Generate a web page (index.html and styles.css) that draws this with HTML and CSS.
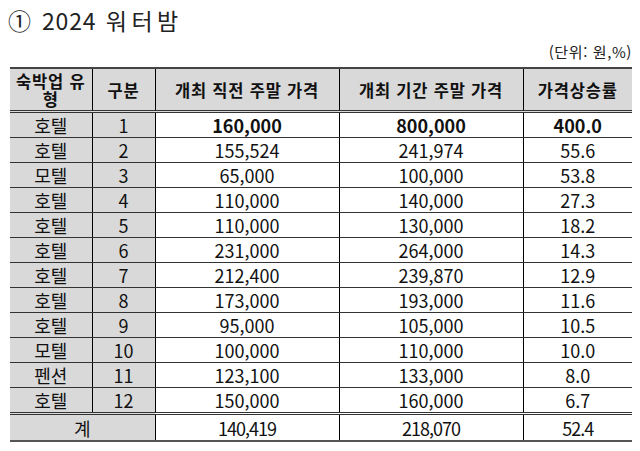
FILE: index.html
```html
<!DOCTYPE html>
<html lang="ko">
<head>
<meta charset="utf-8">
<link rel="stylesheet" href="styles.css">
</head>
<body>
<div class="page">
  <h1 class="title"><span class="num">① 2024</span> <span class="name">워터밤</span></h1>
  <div class="unit">(단위: 원,%)</div>
  <table class="data">
    <colgroup>
      <col class="c1"><col class="c2"><col class="c3"><col class="c4"><col class="c5">
    </colgroup>
    <thead>
      <tr>
        <th>숙박업 유형</th>
        <th>구분</th>
        <th>개최 직전 주말 가격</th>
        <th>개최 기간 주말 가격</th>
        <th>가격상승률</th>
      </tr>
    </thead>
    <tbody>
      <tr class="top"><td class="g">호텔</td><td class="g">1</td><td class="b">160,000</td><td class="b">800,000</td><td class="b">400.0</td></tr>
      <tr><td class="g">호텔</td><td class="g">2</td><td>155,524</td><td>241,974</td><td>55.6</td></tr>
      <tr><td class="g">모텔</td><td class="g">3</td><td>65,000</td><td>100,000</td><td>53.8</td></tr>
      <tr><td class="g">호텔</td><td class="g">4</td><td>110,000</td><td>140,000</td><td>27.3</td></tr>
      <tr><td class="g">호텔</td><td class="g">5</td><td>110,000</td><td>130,000</td><td>18.2</td></tr>
      <tr><td class="g">호텔</td><td class="g">6</td><td>231,000</td><td>264,000</td><td>14.3</td></tr>
      <tr><td class="g">호텔</td><td class="g">7</td><td>212,400</td><td>239,870</td><td>12.9</td></tr>
      <tr><td class="g">호텔</td><td class="g">8</td><td>173,000</td><td>193,000</td><td>11.6</td></tr>
      <tr><td class="g">호텔</td><td class="g">9</td><td>95,000</td><td>105,000</td><td>10.5</td></tr>
      <tr><td class="g">모텔</td><td class="g">10</td><td>100,000</td><td>110,000</td><td>10.0</td></tr>
      <tr><td class="g">펜션</td><td class="g">11</td><td>123,100</td><td>133,000</td><td>8.0</td></tr>
      <tr><td class="g">호텔</td><td class="g">12</td><td>150,000</td><td>160,000</td><td>6.7</td></tr>
    </tbody>
    <tfoot>
      <tr><td class="g" colspan="2">계</td><td>140,419</td><td>218,070</td><td>52.4</td></tr>
    </tfoot>
  </table>
</div>
</body>
</html>
```

FILE: styles.css
```css
html, body {
  margin: 0;
  padding: 0;
  background: #ffffff;
}

.page {
  padding: 0 8px 0 10px;
  font-family: "Noto Sans CJK KR", "Noto Sans", sans-serif;
  color: #111;
}

.title {
  margin: 0 0 0 -2px;
  font-size: 23px;
  font-weight: 400;
  line-height: 40px;
  color: #222;
  word-spacing: 3px;
}

.title .num {
  letter-spacing: 0.8px;
}

.title .name {
  letter-spacing: 4.5px;
}

.unit {
  margin-top: 3px;
  margin-bottom: 6px;
  text-align: right;
  font-size: 15px;
  line-height: 18px;
  letter-spacing: 0.6px;
  color: #222;
}

.data {
  width: 622px;
  border-collapse: collapse;
  table-layout: fixed;
  border-top: 2px solid #444;
  border-bottom: 2px solid #555;
}

.c1 { width: 82px; }
.c2 { width: 63px; }
.c3 { width: 184px; }
.c4 { width: 184px; }
.c5 { width: 109px; }

.data th,
.data td {
  padding: 0;
  text-align: center;
  border-left: 1px solid #000;
  border-bottom: 1px solid #333;
}

.data th:first-child,
.data td:first-child {
  border-left: none;
}

.data th {
  background: #d9d9d9;
  font-size: 16.5px;
  font-weight: 700;
  line-height: 18px;
  letter-spacing: 0.8px;
  height: 41px;
  padding: 0 4px;
  border-bottom: 3px double #333;
}

.data td {
  height: 24px;
  font-size: 18px;
  line-height: 22px;
}

.data td.g {
  background: #d9d9d9;
}

.data td.b {
  font-weight: 700;
}

.data tfoot td {
  height: 25px;
  border-top: 3px double #333;
  letter-spacing: -1px;
}

.data tfoot td.g {
  letter-spacing: 0;
}
```
